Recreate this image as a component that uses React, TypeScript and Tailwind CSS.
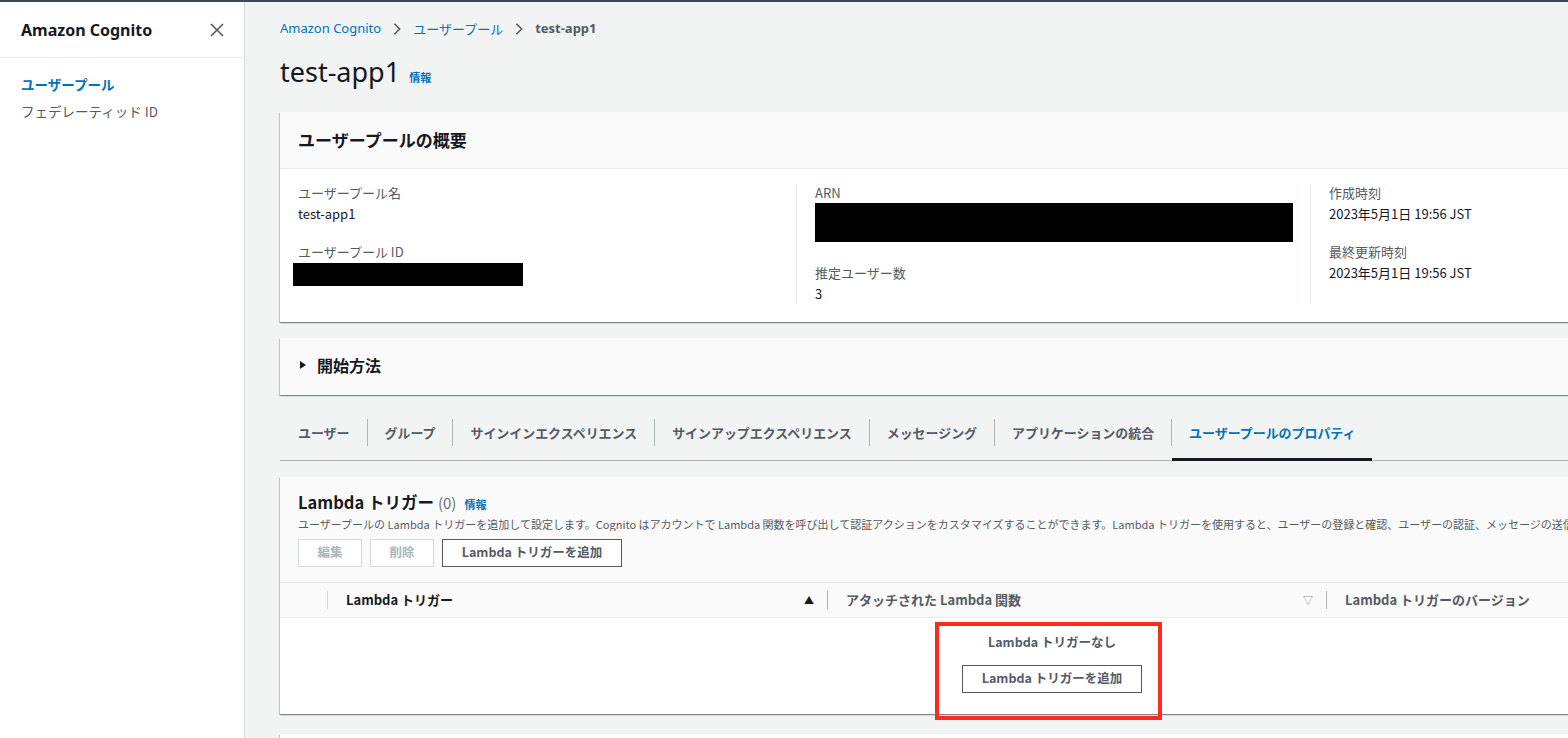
import React from 'react';

const jp = { fontFamily: '"Noto Sans CJK JP", "Noto Sans", sans-serif' };
const latin = { fontFamily: '"Noto Sans", "Noto Sans CJK JP", sans-serif' };

const cardShadow =
  'shadow-[0_1px_1px_0_rgba(0,28,36,0.3),1px_1px_1px_0_rgba(0,28,36,0.15),-1px_1px_1px_0_rgba(0,28,36,0.15)]';

const Chevron = () => (
  <svg width="14" height="14" viewBox="0 0 16 16" className="mx-[9px] text-[#545b64]">
    <path d="M5 2l6 6-6 6" fill="none" stroke="currentColor" strokeWidth="1.8" />
  </svg>
);

const Sidebar = () => (
  <aside className="w-[245px] shrink-0 bg-white border-r border-[#d5dbdb] h-full">
    <div className="h-[56px] flex items-center justify-between pl-[21px] pr-[20px] border-b border-[#eaeded]">
      <span className="text-[16px] font-bold text-[#16191f]" style={latin}>
        Amazon Cognito
      </span>
      <svg width="14" height="14" viewBox="0 0 14 14" className="text-[#545b64]">
        <path d="M1 1l12 12M13 1L1 13" stroke="currentColor" strokeWidth="1.6" />
      </svg>
    </div>
    <nav className="pl-[21px] pt-[17px] flex flex-col gap-[9px] text-[13.5px]" style={jp}>
      <span className="text-[#0073bb] font-bold leading-[18px]">ユーザープール</span>
      <span className="text-[#545b64] leading-[18px]">フェデレーティッド ID</span>
    </nav>
  </aside>
);

const Field = ({ label, children }: { label: string; children: React.ReactNode }) => (
  <div className="flex flex-col">
    <span className="text-[13px] leading-[18px] text-[#545b64]">{label}</span>
    <div className="mt-[3px] text-[13px] leading-[18px] text-[#16191f]">{children}</div>
  </div>
);

const Redacted = ({ w, h, cls = '' }: { w: string; h: string; cls?: string }) => (
  <div className={`bg-black ${w} ${h} ${cls}`} />
);

const Overview = () => (
  <section className={`bg-white ${cardShadow}`}>
    <div className="h-[57px] bg-[#fafafa] border-b border-[#eaeded] flex items-center px-[18px]">
      <h2 className="text-[17px] font-bold text-[#16191f]">ユーザープールの概要</h2>
    </div>
    <div className="grid grid-cols-[498px_514px_1fr] px-[18px] pt-[15px] pb-[18px]">
      <div className="flex flex-col gap-[20px]">
        <Field label="ユーザープール名">test-app1</Field>
        <div className="flex flex-col">
          <span className="text-[13px] leading-[18px] text-[#545b64]">ユーザープール ID</span>
          <Redacted w="w-[230px]" h="h-[23px]" cls="mt-[2px] -ml-[5px]" />
        </div>
      </div>
      <div className="border-l border-[#eaeded] pl-[18px] flex flex-col">
        <span className="text-[13px] leading-[18px] text-[#545b64]">ARN</span>
        <Redacted w="w-[478px]" h="h-[39px]" cls="mt-[1px]" />
        <div className="mt-[22px]">
          <Field label="推定ユーザー数">3</Field>
        </div>
      </div>
      <div className="border-l border-[#eaeded] pl-[18px] flex flex-col gap-[20px] h-[120px]">
        <Field label="作成時刻">2023年5月1日 19:56 JST</Field>
        <Field label="最終更新時刻">2023年5月1日 19:56 JST</Field>
      </div>
    </div>
  </section>
);

const GettingStarted = () => (
  <section className={`bg-[#fafafa] h-[57px] flex items-center px-[18px] pb-[4px] ${cardShadow}`}>
    <svg width="10" height="10" viewBox="0 0 10 10" className="mr-[9px]">
      <path d="M2 1l6 4-6 4z" fill="#16191f" />
    </svg>
    <h2 className="text-[16px] font-bold text-[#16191f]">開始方法</h2>
  </section>
);

const tabs = [
  'ユーザー',
  'グループ',
  'サインインエクスペリエンス',
  'サインアップエクスペリエンス',
  'メッセージング',
  'アプリケーションの統合',
  'ユーザープールのプロパティ',
];

const Tabs = () => (
  <div className="mt-[10px] border-b border-[#aab7b8] flex h-[56px]">
    {tabs.map((t, i) => {
      const active = i === tabs.length - 1;
      return (
        <div key={t} className="flex items-center relative">
          {i > 0 && <span className="w-px h-[27px] bg-[#aab7b8]" />}
          <span
            className={`${i === 0 ? 'pl-[18px]' : 'pl-[17px]'} pr-[17px] h-full flex items-center text-[12.95px] font-bold ${
              active ? 'text-[#0073bb]' : 'text-[#545b64]'
            }`}
          >
            {t}
          </span>
          {active && <span className="absolute left-[1px] right-0 bottom-[-1px] h-[3px] bg-[#16191f]" />}
        </div>
      );
    })}
  </div>
);

const Button = ({ children, disabled, cls = '' }: { children: React.ReactNode; disabled?: boolean; cls?: string }) => (
  <button
    className={`h-[28px] px-[17px] text-[12.5px] font-bold bg-white border ${
      disabled ? 'border-[#d5dbdb] text-[#aab7b8]' : 'border-[#545b64] text-[#545b64]'
    } ${cls}`}
    style={jp}
  >
    {children}
  </button>
);

const LambdaTriggers = () => (
  <section className={`mt-[16px] bg-white ${cardShadow}`}>
    <div className="bg-[#fafafa] px-[18px] pt-[13px] pb-[15px]">
      <div className="flex items-baseline">
        <h2 className="text-[16.5px] font-bold text-[#16191f]">Lambda トリガー</h2>
        <span className="ml-[4px] text-[15px] text-[#687078]">(0)</span>
        <span className="ml-[8px] text-[11px] font-bold text-[#0073bb]">情報</span>
      </div>
      <p className="mt-[2px] text-[11px] leading-[14px] text-[#545b64] whitespace-nowrap overflow-hidden w-[1270px]">
        ユーザープールの Lambda トリガーを追加して設定します。Cognito はアカウントで Lambda 関数を呼び出して認証アクションをカスタマイズすることができます。Lambda トリガーを使用すると、ユーザーの登録と確認、ユーザーの認証、メッセージの送信、ト
      </p>
      <div className="flex gap-[8px] mt-[8px]">
        <Button disabled cls="w-[64px] px-0">編集</Button>
        <Button disabled cls="w-[64px] px-0">削除</Button>
        <Button cls="w-[180px] px-0">Lambda トリガーを追加</Button>
      </div>
    </div>
    <div className="bg-[#fafafa] border-t border-b border-[#eaeded] h-[36px] flex items-center text-[13px] font-bold text-[#16191f]">
      <div className="w-[48px] h-full flex items-center justify-end">
        <span className="w-px h-[18px] bg-[#d5dbdb]" />
      </div>
      <div className="w-[499px] flex items-center justify-between pl-[18px] pr-[13px]">
        <span>Lambda トリガー</span>
        <span className="text-[10px]">▲</span>
      </div>
      <span className="w-px h-[18px] bg-[#aab7b8]" />
      <div className="w-[498px] flex items-center justify-between pl-[18px] pr-[13px]">
        <span className="text-[#545b64]">アタッチされた Lambda 関数</span>
        <span className="text-[10px] text-[#879596] font-normal">▽</span>
      </div>
      <span className="w-px h-[18px] bg-[#aab7b8]" />
      <div className="pl-[18px] text-[#545b64]">Lambda トリガーのバージョン</div>
    </div>
    <div className="flex flex-col items-center pt-[15px] pb-[21px]">
      <span className="text-[12.5px] font-bold text-[#545b64] leading-[18px]">Lambda トリガーなし</span>
      <Button cls="mt-[14px] w-[180px] px-0 border-[#545b64]">Lambda トリガーを追加</Button>
    </div>
  </section>
);

export default function App() {
  return (
    <div className="w-[1568px] h-[738px] overflow-hidden border-t-2 border-[#414750] flex bg-[#f2f3f3]" style={jp}>
      <Sidebar />
      <main className="flex-1 overflow-hidden relative">
        <div className="w-[1544px] ml-[35px]">
          <div className="flex items-center pt-[15px] h-[38px] text-[13px]">
            <span className="text-[#0073bb]" style={latin}>Amazon Cognito</span>
            <Chevron />
            <span className="text-[#0073bb]">ユーザープール</span>
            <Chevron />
            <span className="text-[#545b64] font-bold" style={latin}>test-app1</span>
          </div>
          <div className="flex items-baseline h-[72px] pt-[12px]">
            <h1 className="text-[27px] text-[#16191f]" style={latin}>test-app1</h1>
            <span className="ml-[9px] text-[11px] font-bold text-[#0073bb]">情報</span>
          </div>
          <Overview />
          <div className="mt-[16px]">
            <GettingStarted />
          </div>
          <Tabs />
          <LambdaTriggers />
          <section className={`mt-[20px] bg-white h-[40px] ${cardShadow}`} />
        </div>
        <div className="absolute left-[690px] top-[620px] w-[227px] h-[98px] border-[4px] border-[#ff2a1f]" />
      </main>
    </div>
  );
}
